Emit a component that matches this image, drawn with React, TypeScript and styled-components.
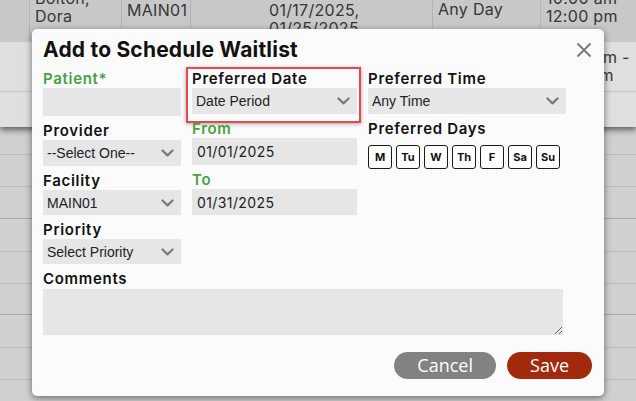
import React from "react";
import styled, { createGlobalStyle } from "styled-components";

const GlobalStyle = createGlobalStyle`
  html, body {
    margin: 0;
    padding: 0;
    overflow: hidden;
  }
  * {
    box-sizing: border-box;
  }
`;

const Page = styled.div`
  position: relative;
  width: 636px;
  height: 401px;
  overflow: hidden;
  background: #d0d0d0;
  font-family: Inter, "Open Sans", sans-serif;
`;

/* ---------- the table behind the dialog ---------- */

const Backdrop = styled.div`
  margin-top: -18px;
`;

const TopTable = styled.div`
  position: relative;
  box-shadow: 0 3px 6px rgba(0, 0, 0, 0.55);
`;

const Row = styled.div<{ $bg: string; $h: number; $line?: string }>`
  display: grid;
  grid-template-columns: 30px 92px 69px 73px 169px 108px 1fr;
  height: ${(p) => p.$h}px;
  background: ${(p) => p.$bg};
  border-bottom: 1px solid ${(p) => p.$line || "transparent"};
`;

const Cell = styled.div<{ $top: number; $divider?: boolean }>`
  padding: ${(p) => p.$top}px 0 0 5px;
  border-right: 1px solid ${(p) => (p.$divider ? "#b4b4b4" : "transparent")};
  font-size: 16px;
  line-height: 18px;
  letter-spacing: 0.3px;
  color: #363636;
  white-space: pre;
  overflow: hidden;
`;

const LowerRow = styled.div<{ $h: number; $dark?: boolean }>`
  height: ${(p) => p.$h}px;
  border-bottom: 1px solid ${(p) => (p.$dark ? "#a8a8a8" : "#bcbcbc")};
`;

/* ---------- dialog ---------- */

const Dialog = styled.div`
  position: absolute;
  left: 32px;
  top: 29px;
  width: 572px;
  height: 367px;
  padding: 9px 12px 17px 11px;
  background: #fbfbfb;
  border-radius: 5px;
  box-shadow: 0 2px 7px rgba(0, 0, 0, 0.5);
  display: flex;
  flex-direction: column;
`;

const Title = styled.h2`
  margin: 0;
  font-size: 21px;
  line-height: 24px;
  font-weight: 700;
  color: #111;
  letter-spacing: 0.2px;
`;

const CloseButton = styled.button`
  position: absolute;
  top: 13px;
  right: 12px;
  width: 16px;
  height: 16px;
  padding: 0;
  border: none;
  background: none;
  display: flex;
`;

const FormGrid = styled.div`
  margin-top: 8px;
  display: grid;
  grid-template-columns: 138px 165px 198px;
  column-gap: 11px;
  align-items: start;
`;

const Column = styled.div`
  display: flex;
  flex-direction: column;
  gap: 6px;
`;

const Field = styled.div<{ $highlight?: boolean }>`
  position: relative;
  display: flex;
  flex-direction: column;

  ${(p) =>
    p.$highlight &&
    `
    &::after {
      content: "";
      position: absolute;
      top: -3px;
      left: -6px;
      right: -4px;
      bottom: -9px;
      border: 2px solid #e8474c;
      box-shadow: 0 1px 4px rgba(0, 0, 0, 0.35);
      pointer-events: none;
    }
  `}
`;

const Label = styled.label<{ $green?: boolean }>`
  height: 18px;
  font-size: 15px;
  line-height: 18px;
  font-weight: 600;
  color: ${(p) => (p.$green ? "#48a043" : "#111")};
  letter-spacing: 0.7px;
  white-space: nowrap;
`;

const TextInput = styled.div<{ $h: number }>`
  height: ${(p) => p.$h}px;
  background: #e6e6e6;
  padding-left: 5px;
  display: flex;
  align-items: center;
  font-size: 14px;
  letter-spacing: 0.4px;
  color: #222;
`;

const SelectBox = styled.div<{ $h: number }>`
  height: ${(p) => p.$h}px;
  background: #e6e6e6;
  padding: 0 7px 0 4px;
  display: flex;
  align-items: center;
  justify-content: space-between;
  font-family: "Liberation Sans", Arial, sans-serif;
  font-size: 14px;
  color: #222;
`;

const DaysRow = styled.div`
  margin-top: 7px;
  display: flex;
  gap: 4px;
`;

const DayButton = styled.button`
  width: 24px;
  height: 24px;
  padding: 0;
  border: 1.5px solid #1a1a1a;
  border-radius: 3px;
  background: #fff;
  font-family: Inter, sans-serif;
  font-size: 11px;
  font-weight: 700;
  color: #111;
  display: flex;
  align-items: center;
  justify-content: center;
`;

const CommentsField = styled.div`
  margin-top: 6px;
  display: flex;
  flex-direction: column;
`;

const CommentsBox = styled.textarea`
  width: 520px;
  height: 46px;
  margin-top: 1px;
  border: none;
  background: #e6e6e6;
  resize: both;
  outline: none;
`;

const Footer = styled.div`
  margin-top: 17px;
  display: flex;
  justify-content: flex-end;
  gap: 11px;
`;

const Button = styled.button<{ $bg: string }>`
  height: 27px;
  padding: 0 23px;
  border: none;
  border-radius: 14px;
  background: ${(p) => p.$bg};
  color: #fff;
  font-family: "Open Sans", "Noto Sans", sans-serif;
  font-size: 18px;
  line-height: 27px;
`;

const Chevron = () => (
  <svg width="13" height="8" viewBox="0 0 13 8">
    <path
      d="M1.5 1.5 L6.5 6.3 L11.5 1.5"
      fill="none"
      stroke="#7d7d7d"
      strokeWidth="2.4"
      strokeLinecap="round"
      strokeLinejoin="round"
    />
  </svg>
);

const Select = ({ value, h = 25 }: { value: string; h?: number }) => (
  <SelectBox $h={h}>
    <span>{value}</span>
    <Chevron />
  </SelectBox>
);

const days = ["M", "Tu", "W", "Th", "F", "Sa", "Su"];

const App = (): JSX.Element => {
  return (
    <Page>
      <GlobalStyle />
      <Backdrop>
        <TopTable>
          <Row $bg="#c8c8c8" $h={60}>
            <Cell $top={7} $divider />
            <Cell $top={7} $divider>
              {"Bolton,\nDora"}
            </Cell>
            <Cell $top={19} $divider>
              MAIN01
            </Cell>
            <Cell $top={19} />
            <Cell $top={19} $divider>
              {"01/17/2025,\n01/25/2025"}
            </Cell>
            <Cell $top={18} $divider>
              Any Day
            </Cell>
            <Cell $top={7}>{"10:00 am\n12:00 pm"}</Cell>
          </Row>
          <Row $bg="#dfdfdf" $h={50} $line="#c6c6c6">
            <Cell $top={6} />
            <Cell $top={6} />
            <Cell $top={6} />
            <Cell $top={6} />
            <Cell $top={6} />
            <Cell $top={6} />
            <Cell $top={6}>{"10:00 am -\n11:00 am"}</Cell>
          </Row>
          <Row $bg="#dfdfdf" $h={35} />
        </TopTable>
        <LowerRow $h={28} />
        <LowerRow $h={32} />
        <LowerRow $h={32} $dark />
        <LowerRow $h={33} />
        <LowerRow $h={32} />
        <LowerRow $h={31} $dark />
        <LowerRow $h={33} />
        <LowerRow $h={32} />
      </Backdrop>

      <Dialog>
        <Title>Add to Schedule Waitlist</Title>
        <CloseButton aria-label="Close">
          <svg width="16" height="16" viewBox="0 0 16 16">
            <path
              d="M1.5 1.5 L14.5 14.5 M14.5 1.5 L1.5 14.5"
              stroke="#777"
              strokeWidth="1.8"
              fill="none"
            />
          </svg>
        </CloseButton>

        <FormGrid>
          <Column>
            <Field>
              <Label $green>Patient*</Label>
              <TextInput $h={28} />
            </Field>
            <Field>
              <Label>Provider</Label>
              <Select value="--Select One--" h={26} />
            </Field>
            <Field>
              <Label>Facility</Label>
              <Select value="MAIN01" />
            </Field>
            <Field>
              <Label>Priority</Label>
              <Select value="Select Priority" />
            </Field>
          </Column>

          <Column>
            <Field $highlight>
              <Label>Preferred Date</Label>
              <Select value="Date Period" h={26} />
            </Field>
            <Field>
              <Label $green>From</Label>
              <TextInput $h={27}>01/01/2025</TextInput>
            </Field>
            <Field>
              <Label $green>To</Label>
              <TextInput $h={26}>01/31/2025</TextInput>
            </Field>
          </Column>

          <Column>
            <Field>
              <Label>Preferred Time</Label>
              <Select value="Any Time" h={26} />
            </Field>
            <Field>
              <Label>Preferred Days</Label>
              <DaysRow>
                {days.map((d) => (
                  <DayButton key={d}>{d}</DayButton>
                ))}
              </DaysRow>
            </Field>
          </Column>
        </FormGrid>

        <CommentsField>
          <Label>Comments</Label>
          <CommentsBox />
        </CommentsField>

        <Footer>
          <Button $bg="#828282">Cancel</Button>
          <Button $bg="#a02a0b">Save</Button>
        </Footer>
      </Dialog>
    </Page>
  );
};

export default App;
